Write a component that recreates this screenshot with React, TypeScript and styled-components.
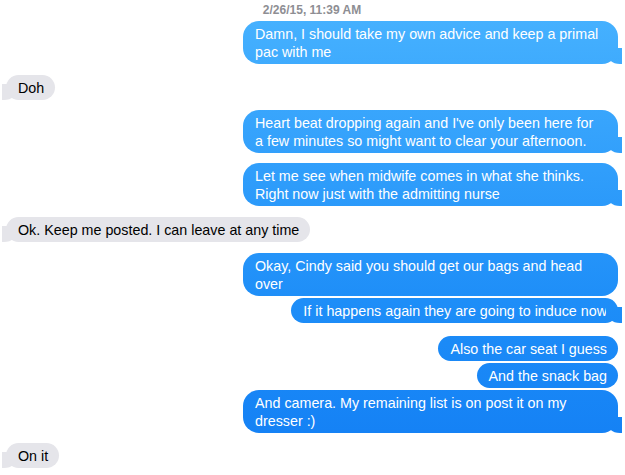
import { createGlobalStyle, css } from 'styled-components';
import styled from 'styled-components';

const GlobalStyle = createGlobalStyle`
  html, body {
    margin: 0;
    padding: 0;
    background: #ffffff;
  }
  body {
    font-family: 'Liberation Sans', Arial, sans-serif;
    -webkit-font-smoothing: antialiased;
  }
`;

const blueGradient = css`
  background-image: linear-gradient(to bottom, #48b3ff 0px, #1e8ef8 300px, #127ef4 475px);
  background-attachment: fixed;
`;

const Thread = styled.div`
  display: flex;
  flex-direction: column;
  padding: 3px 7px 0 6px;
  width: 625px;
  height: 475px;
  box-sizing: border-box;
  overflow: hidden;
`;

const Stamp = styled.div`
  text-align: center;
  font-size: 12px;
  line-height: 15px;
  font-weight: 600;
  color: #8e8e93;
  margin-bottom: 3px;
`;

type Side = 'me' | 'them';

const Bubble = styled.div<{ $side: Side; $tail: boolean; $gap: number; $wide: boolean }>`
  position: relative;
  align-self: ${(p) => (p.$side === 'me' ? 'flex-end' : 'flex-start')};
  box-sizing: border-box;
  width: ${(p) => (p.$wide ? '375px' : 'auto')};
  max-width: 375px;
  margin-top: ${(p) => p.$gap}px;
  padding: 3.5px 11px 3.5px 12px;
  border-radius: 16px;
  font-size: 14.3px;
  line-height: 18px;
  white-space: nowrap;
  color: ${(p) => (p.$side === 'me' ? '#ffffff' : '#000000')};
  ${(p) => (p.$side === 'me' ? blueGradient : 'background: #e5e5ea;')}

  ${(p) =>
    p.$tail &&
    css`
      &::before,
      &::after {
        content: '';
        position: absolute;
        bottom: 0;
        height: 16px;
      }
      &::before {
        ${p.$side === 'me' ? 'right: -4px;' : 'left: -4px;'}
        width: 16px;
        background: inherit;
        ${p.$side === 'me'
          ? 'border-bottom-left-radius: 14px 12px;'
          : 'border-bottom-right-radius: 14px 12px;'}
      }
      &::after {
        ${p.$side === 'me' ? 'right: -16px;' : 'left: -16px;'}
        width: 12px;
        background: #ffffff;
        ${p.$side === 'me'
          ? 'border-bottom-left-radius: 8px;'
          : 'border-bottom-right-radius: 8px;'}
      }
    `}
`;

type Message = {
  side: Side;
  lines: string[];
  tail: boolean;
  gap: number;
};

const messages: Message[] = [
  { side: 'me', lines: ['Damn, I should take my own advice and keep a primal', 'pac with me'], tail: true, gap: 0 },
  { side: 'them', lines: ['Doh'], tail: true, gap: 11 },
  {
    side: 'me',
    lines: ["Heart beat dropping again and I've only been here for", 'a few minutes so might want to clear your afternoon.'],
    tail: true,
    gap: 10,
  },
  {
    side: 'me',
    lines: ['Let me see when midwife comes in what she thinks.', 'Right now just with the admitting nurse'],
    tail: true,
    gap: 10,
  },
  { side: 'them', lines: ['Ok. Keep me posted. I can leave at any time'], tail: true, gap: 11 },
  { side: 'me', lines: ['Okay, Cindy said you should get our bags and head', 'over'], tail: false, gap: 11 },
  { side: 'me', lines: ['If it happens again they are going to induce now'], tail: true, gap: 2 },
  { side: 'me', lines: ['Also the car seat I guess'], tail: false, gap: 13 },
  { side: 'me', lines: ['And the snack bag'], tail: false, gap: 2 },
  { side: 'me', lines: ['And camera. My remaining list is on post it on my', 'dresser :)'], tail: true, gap: 2 },
  { side: 'them', lines: ['On it'], tail: true, gap: 10 },
];

export default function App() {
  return (
    <>
      <GlobalStyle />
      <Thread>
        <Stamp>2/26/15, 11:39 AM</Stamp>
        {messages.map((m, i) => (
          <Bubble key={i} $side={m.side} $tail={m.tail} $gap={m.gap} $wide={m.lines.length > 1}>
            {m.lines.map((l, j) => (
              <div key={j}>{l}</div>
            ))}
          </Bubble>
        ))}
      </Thread>
    </>
  );
}
